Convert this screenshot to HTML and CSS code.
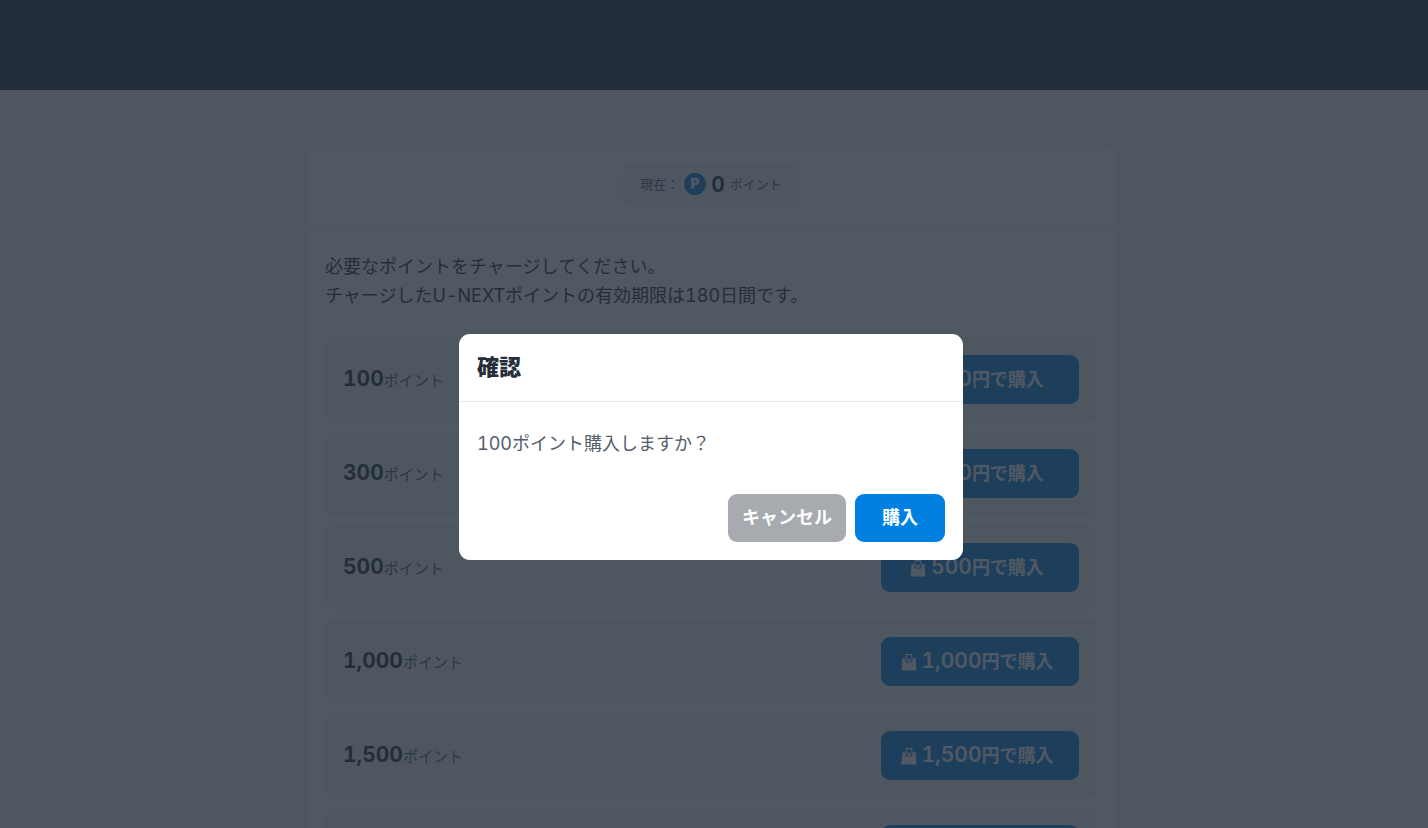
FILE: index.html
```html
<!DOCTYPE html>
<html lang="ja">
<head>
    <meta charset="UTF-8">
    <meta name="viewport" content="width=device-width, initial-scale=1.0">
    <title>ポイントチャージ</title>
    <link rel="stylesheet" href="styles.css">
</head>
<body>

<svg class="sprite" aria-hidden="true">
    <symbol id="bag" viewBox="0 0 16 18">
        <path fill="none" stroke="currentColor" stroke-width="1.2" d="M5.2 5.2V1.6h5.6v3.6"/>
        <path fill="currentColor" fill-rule="evenodd" d="M1.4 5.2h3.2v4.4h6.8V5.2h3.2l.9 12.2H.5zM5.8 5.2h4.4v3.2H5.8zM7 5.2v1.2h2V5.2z"/>
    </symbol>
</svg>

<header class="site-header"></header>

<main class="page">
    <section class="card">
        <div class="card-header">
            <p class="balance">
                <span>現在：</span>
                <span class="coin">P</span>
                <strong>0</strong>
                <span>ポイント</span>
            </p>
        </div>
        <div class="card-body">
            <p class="lead">必要なポイントをチャージしてください。<br>チャージしたU-NEXTポイントの有効期限は180日間です。</p>
            <ul class="plans">
                <li class="plan">
                    <p class="plan-name"><strong>100</strong>ポイント</p>
                    <button type="button" class="btn btn-plan"><svg class="icon"><use href="#bag"/></svg><span><b>100</b>円で購入</span></button>
                </li>
                <li class="plan">
                    <p class="plan-name"><strong>300</strong>ポイント</p>
                    <button type="button" class="btn btn-plan"><svg class="icon"><use href="#bag"/></svg><span><b>300</b>円で購入</span></button>
                </li>
                <li class="plan">
                    <p class="plan-name"><strong>500</strong>ポイント</p>
                    <button type="button" class="btn btn-plan"><svg class="icon"><use href="#bag"/></svg><span><b>500</b>円で購入</span></button>
                </li>
                <li class="plan">
                    <p class="plan-name"><strong>1,000</strong>ポイント</p>
                    <button type="button" class="btn btn-plan"><svg class="icon"><use href="#bag"/></svg><span><b>1,000</b>円で購入</span></button>
                </li>
                <li class="plan">
                    <p class="plan-name"><strong>1,500</strong>ポイント</p>
                    <button type="button" class="btn btn-plan"><svg class="icon"><use href="#bag"/></svg><span><b>1,500</b>円で購入</span></button>
                </li>
                <li class="plan">
                    <p class="plan-name"><strong>2,000</strong>ポイント</p>
                    <button type="button" class="btn btn-plan"><svg class="icon"><use href="#bag"/></svg><span><b>2,000</b>円で購入</span></button>
                </li>
            </ul>
        </div>
    </section>
</main>

<div class="overlay">
    <div class="dialog" role="dialog" aria-modal="true" aria-labelledby="dialogTitle">
        <h2 class="dialog-title" id="dialogTitle">確認</h2>
        <div class="dialog-body">
            <p class="dialog-text">100ポイント購入しますか？</p>
            <div class="dialog-actions">
                <button type="button" class="btn btn-cancel">キャンセル</button>
                <button type="button" class="btn btn-buy">購入</button>
            </div>
        </div>
    </div>
</div>

</body>
</html>
```
FILE: styles.css
```css
* {
    box-sizing: border-box;
}
body {
    margin: 0;
    height: 100vh;
    overflow: hidden;
    background-color: #faf1f8;
    color: #242e3b;
    font-family: Inter, "Noto Sans CJK JP", sans-serif;
    font-size: 18px;
    line-height: 29px;
    font-variant-numeric: tabular-nums;
    font-variant-ligatures: no-contextual;
}
p, ul, h2 {
    margin: 0;
    padding: 0;
}
.sprite {
    display: none;
}
.site-header {
    height: 90px;
    background-color: #242e39;
}

/* card */
.page {
    padding: 56px 6px 56px 0;
}
.card {
    width: 100%;
    max-width: 808px;
    margin: 0 auto;
    background-color: #fff;
    border-radius: 9px;
}
.card-header {
    display: flex;
    justify-content: center;
    padding: 18px;
    border-bottom: 1px solid #e9ebed;
}
.balance {
    display: flex;
    align-items: center;
    gap: 5px;
    height: 42px;
    padding: 0 18px 2px;
    border-radius: 9px;
    background-color: #f2f4f5;
    color: #535d6b;
    font-size: 13px;
}
.balance strong {
    color: #242e3b;
    font-size: 21px;
}
.coin {
    width: 22px;
    height: 22px;
    border-radius: 50%;
    background-color: #0080e0;
    color: #fff;
    font-size: 14px;
    font-weight: 900;
    line-height: 22px;
    text-align: center;
}
.card-body {
    padding: 27px 18px;
}

/* plans */
.plans {
    display: flex;
    flex-direction: column;
    gap: 9px;
    margin-top: 27px;
    list-style: none;
}
.plan {
    display: flex;
    align-items: center;
    justify-content: space-between;
    padding: 18px;
    border-radius: 9px;
    background-color: #f2f4f5;
}
.plan-name {
    color: #535d6b;
    font-size: 15px;
}
.plan-name strong {
    color: #242e3b;
    font-size: 21px;
}

/* buttons */
.btn {
    display: flex;
    align-items: center;
    justify-content: center;
    height: 48px;
    padding: 0 14px 4px;
    border: none;
    border-radius: 9px;
    color: #fff;
    font-family: inherit;
    font-size: 18px;
    font-weight: 700;
    font-variant-numeric: inherit;
    cursor: pointer;
}
.btn-plan {
    gap: 5px;
    width: 198px;
    height: 49px;
    padding: 0 6px 4px 0;
    background-color: #0080e0;
}
.btn-plan b {
    font-size: 21px;
    font-weight: 600;
}
.icon {
    width: 16px;
    height: 18px;
    margin-top: 4px;
}
.btn-cancel {
    background-color: #a7abb0;
}
.btn-buy {
    padding: 0 27px 4px;
    background-color: #0080e0;
}

/* dialog */
.overlay {
    position: fixed;
    inset: 0;
    display: flex;
    align-items: center;
    justify-content: center;
    padding: 66px 6px 0 0;
    background-color: rgba(36, 46, 59, 0.8);
}
.dialog {
    width: 504px;
    max-width: 100%;
    border-radius: 11px;
    background-color: #fff;
}
.dialog-title {
    padding: 18px;
    border-bottom: 1px solid #e6e8ea;
    font-size: 22px;
    font-weight: 900;
    line-height: 31px;
}
.dialog-body {
    padding: 27px 18px 18px;
}
.dialog-text {
    color: #535d6b;
}
.dialog-actions {
    display: flex;
    justify-content: flex-end;
    gap: 9px;
    margin-top: 36px;
}

@media (max-width: 600px) {
    .btn-plan {
        width: 170px;
    }
}
```
